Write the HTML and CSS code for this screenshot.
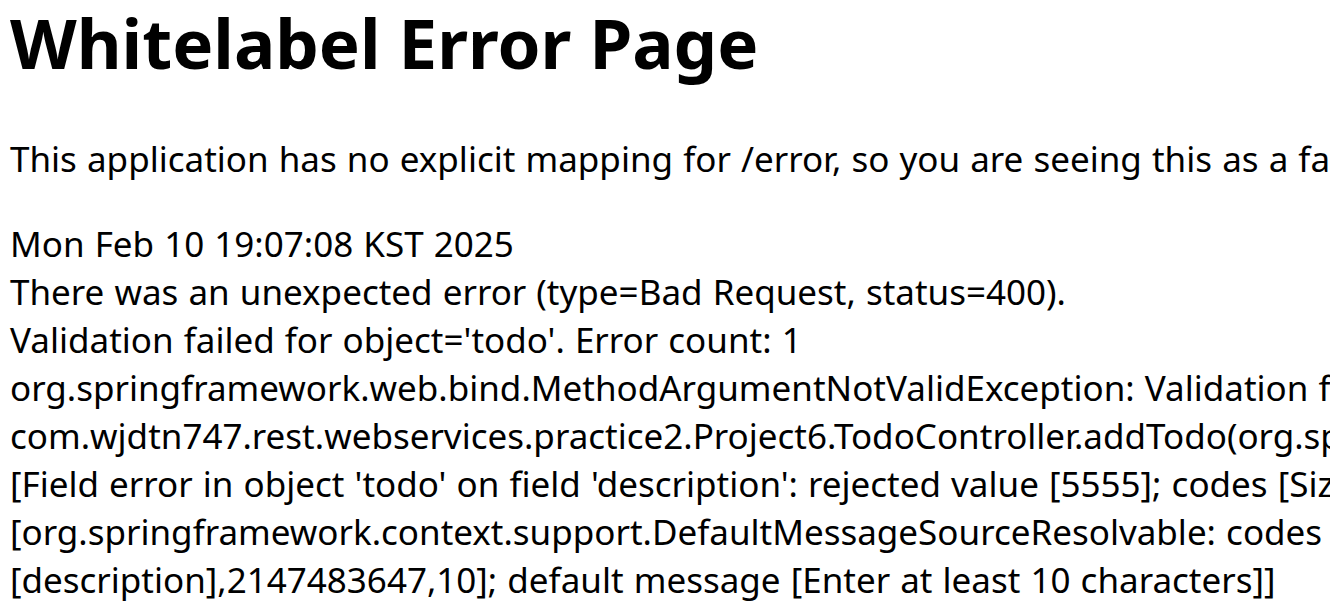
FILE: index.html
```html
<!DOCTYPE html>
<html>
<head>
<meta charset="utf-8">
<link rel="stylesheet" href="styles.css">
</head>
<body>
<h1 class="title">Whitelabel Error Page</h1>
<p class="intro">This application has no explicit mapping for /error, so you are seeing this as a fallback.</p>
<div class="line">Mon Feb 10 19:07:08 KST 2025</div>
<div class="line">There was an unexpected error (type=Bad Request, status=400).</div>
<div class="message">
<div class="line">Validation failed for object='todo'. Error count: 1</div>
<div class="line">org.springframework.web.bind.MethodArgumentNotValidException: Validation failed for argument [0] in public</div>
<div class="line">com.wjdtn747.rest.webservices.practice2.Project6.TodoController.addTodo(org.springframework.web.bind.annotation.RequestBody)</div>
<div class="line">[Field error in object 'todo' on field 'description': rejected value [5555]; codes [Size.todo.description,Size.description]; arguments</div>
<div class="line">[org.springframework.context.support.DefaultMessageSourceResolvable: codes [todo.description,description]; arguments []; default message</div>
<div class="line">[description],2147483647,10]; default message [Enter at least 10 characters]]</div>
</div>
</body>
</html>
```
FILE: styles.css
```css
html, body {
  margin: 0;
  padding: 0;
  background: #fff;
  overflow: hidden;
}
body {
  padding: 0 0 0 10px;
  width: 1320px;
  height: 606px;
  font-family: "Noto Sans", "Open Sans", sans-serif;
  color: #000;
  white-space: nowrap;
}
.title {
  font-size: 69px;
  font-weight: 700;
  line-height: 96px;
  margin: -6px 0 0 0;
}
.intro {
  font-size: 35px;
  word-spacing: 1px;
  line-height: 48px;
  margin: 45px 0 37px 0;
}
.line {
  font-size: 35px;
  word-spacing: 1px;
  line-height: 48px;
}
.line.num {
  letter-spacing: 0;
}
```
